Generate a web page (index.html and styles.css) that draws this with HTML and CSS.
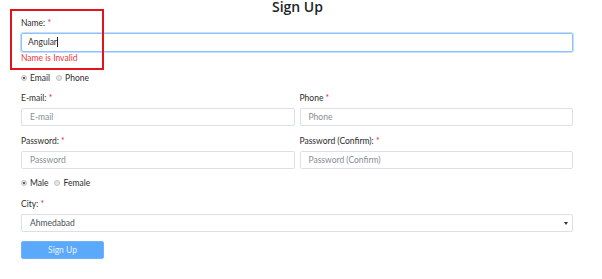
FILE: index.html
```html
<!DOCTYPE html>
<html>
<head>
<meta charset="utf-8">
<link rel="stylesheet" href="styles.css">
</head>
<body>
<div class="page">
  <h1 class="title">Sign Up</h1>
  <form class="form">
    <div class="group">
      <label class="label">Name: <span class="req">*</span></label>
      <div class="input focused">Angular<span class="caret"></span></div>
      <div class="error">Name is Invalid</div>
    </div>
    <div class="radios first">
      <span class="radio"><span class="dot checked"></span>Email</span>
      <span class="radio"><span class="dot"></span>Phone</span>
    </div>
    <div class="row">
      <div class="group">
        <label class="label">E-mail: <span class="req">*</span></label>
        <div class="input ph">E-mail</div>
      </div>
      <div class="group">
        <label class="label">Phone <span class="req">*</span></label>
        <div class="input ph">Phone</div>
      </div>
    </div>
    <div class="row">
      <div class="group">
        <label class="label">Password: <span class="req">*</span></label>
        <div class="input ph">Password</div>
      </div>
      <div class="group">
        <label class="label">Password (Confirm): <span class="req">*</span></label>
        <div class="input ph">Password (Confirm)</div>
      </div>
    </div>
    <div class="radios">
      <span class="radio"><span class="dot checked"></span>Male</span>
      <span class="radio"><span class="dot"></span>Female</span>
    </div>
    <div class="group">
      <label class="label">City: <span class="req">*</span></label>
      <div class="input select">Ahmedabad<span class="arrow"></span></div>
    </div>
    <button type="button" class="btn">Sign Up</button>
  </form>
  <div class="annot"></div>
</div>
</body>
</html>
```
FILE: styles.css
```css
html, body {
  margin: 0;
  padding: 0;
  background: #fff;
}
body {
  font-family: "Lato", "Open Sans", sans-serif;
  color: #212529;
  font-size: 8.5px;
}
.page {
  position: relative;
  width: 602px;
  height: 279px;
  overflow: hidden;
}
.title {
  margin: 0;
  height: 14px;
  line-height: 14px;
  font-family: "Open Sans", sans-serif;
  font-size: 14px;
  font-weight: 600;
  text-align: center;
  color: #212529;
  padding-right: 7px;
}
.form {
  padding: 0 29px 0 21px;
  margin-top: 3px;
}
.group {
  display: flex;
  flex-direction: column;
}
.label {
  height: 12px;
  line-height: 12px;
  margin-bottom: 4px;
  color: #2b2b2b;
}
.req { color: #e02a2a; }
.input {
  box-sizing: border-box;
  height: 18px;
  line-height: 16px;
  border: 1px solid #dcdfe3;
  border-radius: 2px;
  padding: 0 8px;
  color: #495057;
  margin-bottom: 9px;
  position: relative;
}
.ph { color: #868d94; }
.focused {
  border-color: #8cc2f8;
  box-shadow: 0 0 0 1px #c4defb;
  height: 19px;
  line-height: 17px;
  padding-left: 6px;
  margin-bottom: 0;
  color: #333;
}
.caret {
  display: inline-block;
  width: 1px;
  height: 10px;
  background: #222;
  vertical-align: -2px;
}
.error {
  height: 12px;
  line-height: 12px;
  color: #f0353c;
  margin-bottom: 8px;
}
.radios {
  display: flex;
  gap: 6px;
  height: 12px;
  line-height: 12px;
  margin-bottom: 9px;
  color: #2b2b2b;
}
.radios.first { margin-bottom: 8px; }
.radio {
  display: flex;
  align-items: center;
  gap: 3px;
}
.dot {
  box-sizing: border-box;
  width: 6px;
  height: 6px;
  border-radius: 50%;
  border: 1px solid #c2c2c2;
  background: #e6e6e6;
  position: relative;
}
.dot.checked::after {
  content: "";
  position: absolute;
  left: 1px;
  top: 1px;
  width: 2px;
  height: 2px;
  border-radius: 50%;
  background: #333;
}
.row {
  display: grid;
  grid-template-columns: 1fr 1fr;
  gap: 5px;
}
.row + .radios { margin-top: -1px; }
.select {
  padding-left: 8px;
  color: #495057;
}
.arrow {
  position: absolute;
  right: 4px;
  top: 7px;
  width: 0;
  height: 0;
  border-left: 2px solid transparent;
  border-right: 2px solid transparent;
  border-top: 3px solid #333;
}
.btn {
  display: block;
  box-sizing: border-box;
  width: 83px;
  height: 18px;
  border: 1px solid #6fb4fb;
  border-radius: 2px;
  background: #5aa9fa;
  color: #e8f2ff;
  font-family: inherit;
  font-size: 8.5px;
  padding: 0;
}
.annot {
  position: absolute;
  left: 10px;
  top: 9px;
  width: 94px;
  height: 61px;
  box-sizing: border-box;
  border: 2px solid #e3131b;
}
```
